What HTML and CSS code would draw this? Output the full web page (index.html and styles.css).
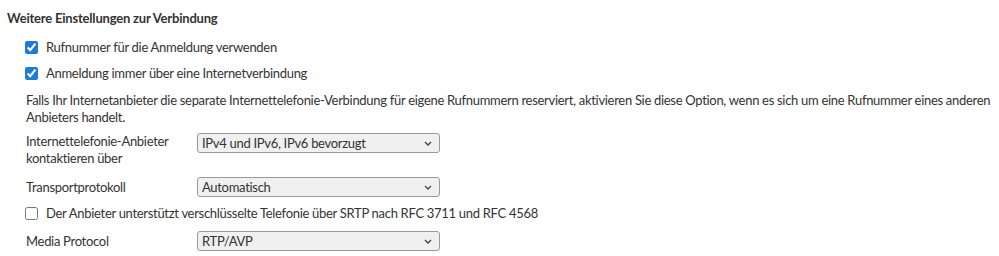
FILE: index.html
```html
<!DOCTYPE html>
<html lang="de">
<head>
    <meta charset="UTF-8">
    <meta name="viewport" content="width=device-width, initial-scale=1.0">
    <title>Weitere Einstellungen zur Verbindung</title>
    <link rel="stylesheet" href="styles.css">
</head>
<body>

    <div class="settings">
        <h2 class="settings-title">Weitere Einstellungen zur Verbindung</h2>

        <div class="settings-body">
            <!-- Checkbox options -->
            <label class="check-row first">
                <input type="checkbox" checked>
                <span>Rufnummer für die Anmeldung verwenden</span>
            </label>
            <label class="check-row">
                <input type="checkbox" checked>
                <span>Anmeldung immer über eine Internetverbindung</span>
            </label>

            <p class="hint">Falls Ihr Internetanbieter die separate Internettelefonie-Verbindung für eigene Rufnummern reserviert, aktivieren Sie diese Option, wenn es sich um eine Rufnummer eines anderen Anbieters handelt.</p>

            <!-- Select rows -->
            <div class="form-row top">
                <label class="form-label" for="ipmode">Internettelefonie-Anbieter kontaktieren über</label>
                <div class="select-wrap">
                    <select id="ipmode">
                        <option>IPv4 und IPv6, IPv6 bevorzugt</option>
                    </select>
                    <svg class="chevron" width="8" height="5" viewBox="0 0 8 5"><path d="M1 1l3 3 3-3" fill="none" stroke="#444" stroke-width="1.4"/></svg>
                </div>
            </div>

            <div class="form-row">
                <label class="form-label" for="transport">Transportprotokoll</label>
                <div class="select-wrap">
                    <select id="transport">
                        <option>Automatisch</option>
                    </select>
                    <svg class="chevron" width="8" height="5" viewBox="0 0 8 5"><path d="M1 1l3 3 3-3" fill="none" stroke="#444" stroke-width="1.4"/></svg>
                </div>
            </div>

            <label class="check-row srtp">
                <input type="checkbox">
                <span>Der Anbieter unterstützt verschlüsselte Telefonie über SRTP nach RFC 3711 und RFC 4568</span>
            </label>

            <div class="form-row media">
                <label class="form-label" for="media">Media Protocol</label>
                <div class="select-wrap">
                    <select id="media">
                        <option>RTP/AVP</option>
                    </select>
                    <svg class="chevron" width="8" height="5" viewBox="0 0 8 5"><path d="M1 1l3 3 3-3" fill="none" stroke="#444" stroke-width="1.4"/></svg>
                </div>
            </div>
        </div>
    </div>

</body>
</html>
```

FILE: styles.css
```css
body {
    font-family: 'Lato', 'Liberation Sans', sans-serif;
    font-size: 13px;
    letter-spacing: -0.3px;
    line-height: 17px;
    color: #333;
    background-color: #fff;
    margin: 0;
    padding: 0;
}

.settings {
    padding: 10px 0 0 7px;
}

.settings-title {
    margin: 0;
    font-size: 13px;
    font-weight: bold;
    letter-spacing: -0.2px;
    line-height: 17px;
}

.settings-body {
    display: flex;
    flex-direction: column;
    padding-left: 18px;
}

/* Checkbox rows */
.check-row {
    display: flex;
    align-items: center;
    gap: 8px;
    margin-top: 9px;
}

.check-row.first {
    margin-top: 12px;
}

.check-row.srtp {
    margin-top: 8px;
}

.check-row input {
    width: 13px;
    height: 13px;
    margin: 0;
    accent-color: #1c7bd6;
}

.hint {
    margin: 10px 0 0 1px;
}

/* Label + select rows */
.form-row {
    display: flex;
    align-items: center;
    margin-top: 10px;
    padding-left: 1px;
}

.form-row.top {
    align-items: flex-start;
    margin-top: 7px;
}

.form-row.media {
    margin-top: 9px;
}

.form-label {
    width: 171px;
}

.select-wrap {
    position: relative;
    width: 243px;
}

.select-wrap select {
    appearance: none;
    -webkit-appearance: none;
    width: 100%;
    height: 20px;
    margin: 0;
    padding: 0 20px 0 4px;
    font-family: inherit;
    font-size: 13px;
    letter-spacing: -0.3px;
    color: #333;
    background-color: #f0f0f0;
    border: 1px solid #9a9a9a;
    border-radius: 3px;
}

.chevron {
    position: absolute;
    right: 8px;
    top: 8px;
    pointer-events: none;
}
```
